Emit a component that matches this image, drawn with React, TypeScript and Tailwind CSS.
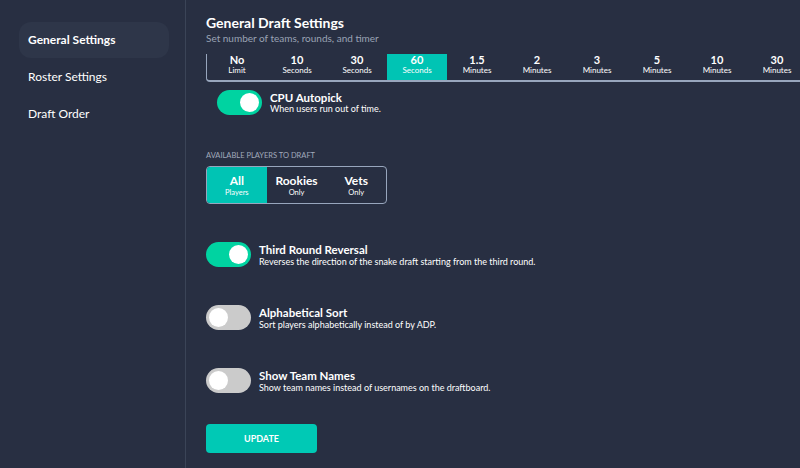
const timers = [
  ["No", "Limit"],
  ["10", "Seconds"],
  ["30", "Seconds"],
  ["60", "Seconds"],
  ["1.5", "Minutes"],
  ["2", "Minutes"],
  ["3", "Minutes"],
  ["5", "Minutes"],
  ["10", "Minutes"],
  ["30", "Minutes"],
];

function Toggle({ on }: { on: boolean }) {
  return (
    <div
      className={`flex h-[25px] w-[45px] shrink-0 items-center rounded-full px-[3px] ${
        on ? "justify-end bg-[#00d3a1]" : "justify-start bg-[#cbcbcb]"
      }`}
    >
      <div className="h-[19px] w-[19px] rounded-full bg-white" />
    </div>
  );
}

function Setting({ on, title, desc, indent }: { on: boolean; title: string; desc: string; indent?: boolean }) {
  return (
    <div className={`flex items-center gap-2 ${indent ? "ml-[11px]" : ""}`}>
      <Toggle on={on} />
      <div className="leading-none">
        <p className="text-[11.5px] font-bold text-white">{title}</p>
        <p className="mt-[1px] text-[9px] text-white">{desc}</p>
      </div>
    </div>
  );
}

export default function App() {
  return (
    <div
      className="flex h-[468px] w-[800px] overflow-hidden bg-[#282f42] text-white"
      style={{ fontFamily: "Lato, 'Noto Sans', sans-serif" }}
    >
      <aside className="w-[186px] shrink-0 border-r border-[#3b4457] pl-[19px] pt-[22px]">
        <div className="flex h-[36px] w-[150px] items-center rounded-xl bg-[#2e3649] pl-[9px] text-[12px] font-bold">
          General Settings
        </div>
        <div className="flex h-[37px] items-center pl-[9px] text-[12px]">Roster Settings</div>
        <div className="flex h-[37px] items-center pl-[9px] text-[12px]">Draft Order</div>
      </aside>
      <main className="flex-1 pl-[20px] pt-[14px]">
        <h1 className="text-[14px] font-bold leading-[18px]">General Draft Settings</h1>
        <p className="text-[10px] leading-[13px] text-[#9aa3b5]">Set number of teams, rounds, and timer</p>
        <div className="mt-[9px] h-[28px] overflow-hidden rounded-bl-sm border-b-2 border-l border-[#98a6bd]">
          <div className="-mt-[6px] flex">
            {timers.map(([n, u], i) => (
              <div
                key={i}
                className={`flex h-[32px] w-[60px] shrink-0 flex-col items-center justify-center leading-none ${
                  i === 3 ? "bg-[#00c4b4]" : ""
                }`}
              >
                <span className="text-[11px] font-bold">{n}</span>
                <span className="mt-[1px] text-[8px]">{u}</span>
              </div>
            ))}
          </div>
        </div>
        <div className="mt-[8px]">
          <Setting indent on title="CPU Autopick" desc="When users run out of time." />
        </div>
        <p className="mt-[35px] text-[7.5px] uppercase text-[#a2aabb]">Available players to draft</p>
        <div className="mt-[5px] flex h-[38px] w-[181px] overflow-hidden rounded-sm border border-[#98a6bd]">
          {[
            ["All", "Players"],
            ["Rookies", "Only"],
            ["Vets", "Only"],
          ].map(([a, b], i) => (
            <div
              key={i}
              className={`flex w-[60px] flex-col items-center justify-center leading-none ${i === 0 ? "bg-[#00c4b4]" : ""}`}
            >
              <span className="text-[12px] font-bold">{a}</span>
              <span className="mt-[2px] text-[7.5px]">{b}</span>
            </div>
          ))}
        </div>
        <div className="mt-[38px] flex flex-col gap-[38px]">
          <Setting on title="Third Round Reversal" desc="Reverses the direction of the snake draft starting from the third round." />
          <Setting on={false} title="Alphabetical Sort" desc="Sort players alphabetically instead of by ADP." />
          <Setting on={false} title="Show Team Names" desc="Show team names instead of usernames on the draftboard." />
        </div>
        <button className="mt-[31px] h-[29px] w-[111px] rounded-sm bg-[#00c9b5] text-[9px] font-bold">UPDATE</button>
      </main>
    </div>
  );
}
